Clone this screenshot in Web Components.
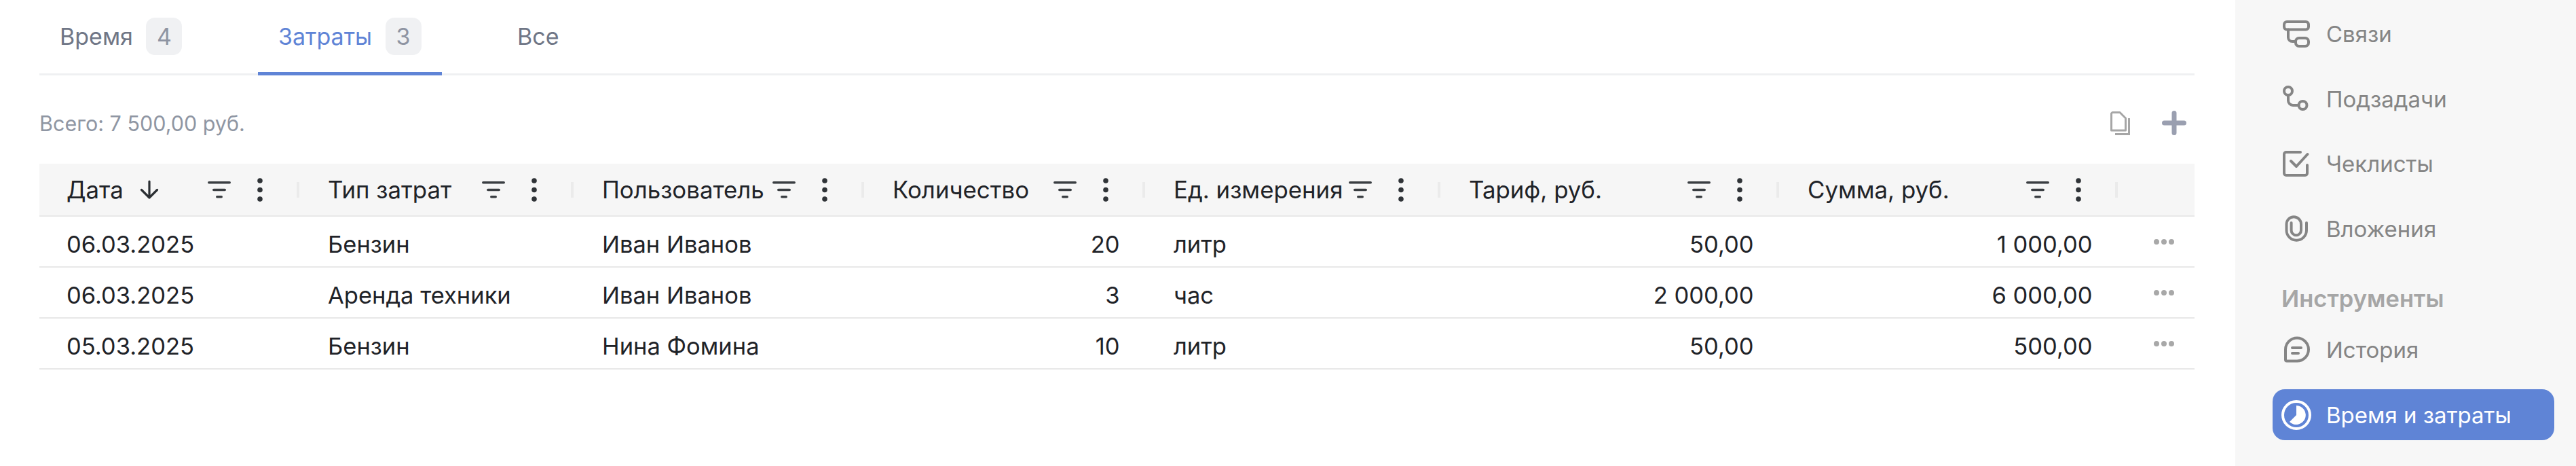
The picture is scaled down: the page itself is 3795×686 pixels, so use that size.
<!DOCTYPE html>
<html lang="ru">
<head>
<meta charset="utf-8">
<title>Время и затраты</title>
<style>
  html, body { margin: 0; height: 100%; background: #fff; overflow: hidden; }
  body { font-family: Inter, "Noto Sans", sans-serif; }
</style>
</head>
<body>
<task-page>
  <tab-bar>
    <tab-item count="4">Время</tab-item>
    <tab-item count="3" active>Затраты</tab-item>
    <tab-item>Все</tab-item>
  </tab-bar>
  <cost-toolbar>Всего: 7 500,00 руб.</cost-toolbar>
  <cost-table></cost-table>
  <side-nav slot="side">
    <side-item icon="links">Связи</side-item>
    <side-item icon="subtasks">Подзадачи</side-item>
    <side-item icon="checklist">Чеклисты</side-item>
    <side-item icon="attach">Вложения</side-item>
    <side-label>Инструменты</side-label>
    <side-item icon="history">История</side-item>
    <side-item icon="clock" active>Время и затраты</side-item>
  </side-nav>
</task-page>

<script>
// small helper, every element here is the same shape: static markup in an open shadow root
class Base extends HTMLElement {
  constructor() {
    super();
    this.attachShadow({ mode: 'open' });
  }
  connectedCallback() {
    this.render();
  }
}

class TaskPage extends Base {
  render() {
    this.shadowRoot.innerHTML = `
      <style>
        :host { display: flex; height: 686px; width: 3795px; }
        main { flex: none; width: 3175px; margin-left: 58px; margin-right: 60px; }
        aside { flex: 1; background: #f7f7f7; }
      </style>
      <main><slot></slot></main>
      <aside><slot name="side"></slot></aside>
    `;
  }
}

class TabBar extends Base {
  render() {
    this.shadowRoot.innerHTML = `
      <style>
        :host {
          display: flex;
          gap: 81.500px;
          height: 111px;
          box-sizing: border-box;
          border-bottom: 3px solid #eff0f2;
        }
      </style>
      <slot></slot>
    `;
  }
}

class TabItem extends Base {
  render() {
    const count = this.getAttribute('count');
    this.shadowRoot.innerHTML = `
      <style>
        :host {
          display: flex;
          align-items: flex-start;
          gap: 19.500px;
          height: 111px;
          box-sizing: border-box;
          padding: 26px 30px 0;
          font-size: 34px;
          color: #6f7686;
        }
        :host([active]) {
          color: #5f84d6;
          border-bottom: 5px solid #5f84d6;
        }
        .label { line-height: 55px; }
        .badge {
          width: 53px;
          height: 55px;
          line-height: 55px;
          text-align: center;
          border-radius: 13px;
          background: #f0f1f3;
          color: #8e94a2;
        }
      </style>
      <span class="label"><slot></slot></span>
      ${count ? `<span class="badge">${count}</span>` : ''}
    `;
  }
}

class CostToolbar extends Base {
  render() {
    this.shadowRoot.innerHTML = `
      <style>
        :host {
          display: flex;
          align-items: center;
          height: 130px;
          box-sizing: border-box;
          padding-top: 10px;
          font-size: 30.500px;
          color: #8f96a3;
        }
        .total { flex: 1; }
        .copy { margin-right: 47px; }
        .plus { margin-right: 12px; }
        svg { display: block; }
      </style>
      <span class="total"><slot></slot></span>
      <svg class="copy" width="29" height="35" viewBox="0 0 29 35" fill="none" stroke="#a6a6a6" stroke-width="3">
        <path d="M3 1.500H14L22.500 10V28H1.500V3Z" stroke-linejoin="round"/>
        <path d="M27.500 10V33.500H7"/>
      </svg>
      <svg class="plus" width="36" height="36" viewBox="0 0 36 36" fill="none" stroke="#9a9fb0" stroke-width="7" stroke-linecap="round">
        <path d="M18 3.500V32.500M3.500 18H32.500"/>
      </svg>
    `;
  }
}

const COLS = '385px 404px 428px 414px 435px 499px 499px 111px';

class CostTable extends Base {
  render() {
    const heads = ['Дата', 'Тип затрат', 'Пользователь', 'Количество', 'Ед. измерения', 'Тариф, руб.', 'Сумма, руб.'];
    const rows = [
      ['06.03.2025', 'Бензин', 'Иван Иванов', '20', 'литр', '50,00', '1 000,00'],
      ['06.03.2025', 'Аренда техники', 'Иван Иванов', '3', 'час', '2 000,00', '6 000,00'],
      ['05.03.2025', 'Бензин', 'Нина Фомина', '10', 'литр', '50,00', '500,00'],
    ];
    const right = [3, 5, 6];
    this.shadowRoot.innerHTML = `
      <style>
        :host { display: block; font-size: 34.500px; color: #1f2328; }
        .head, .row { display: grid; grid-template-columns: ${COLS}; }
        .head { height: 78px; box-sizing: border-box; background: #f6f6f6; border-bottom: 2px solid #e8e8e8; font-size: 34.800px; }
        .row { height: 75px; grid-template-rows: 73px; box-sizing: border-box; border-bottom: 2px solid #e8e8e8; }
      </style>
      <div class="head">
        ${heads.map((h, i) => `<head-cell ${i === 0 ? 'sorted' : ''}>${h}</head-cell>`).join('')}
        <span></span>
      </div>
      ${rows.map(r => `
        <div class="row">
          ${r.map((c, i) => `<body-cell ${right.includes(i) ? 'right' : ''}>${c}</body-cell>`).join('')}
          <row-menu></row-menu>
        </div>
      `).join('')}
    `;
  }
}

class HeadCell extends Base {
  render() {
    const arrow = this.hasAttribute('sorted') ? `
      <svg class="arrow" width="28" height="28" viewBox="0 0 28 28" fill="none" stroke="#2b2f33" stroke-width="3.200" stroke-linecap="round" stroke-linejoin="round">
        <path d="M14 2V26M2.500 14.500L14 26L25.500 14.500"/>
      </svg>` : '';
    this.shadowRoot.innerHTML = `
      <style>
        :host {
          display: flex;
          align-items: center;
          padding: 0 2px 0 40px;
          min-width: 0;
        }
        .title { flex: 1; min-width: 0; display: flex; align-items: center; gap: 24px; white-space: nowrap; }
        svg { display: block; flex: none; }
        .filter { margin-right: 39px; }
        .dots { margin-right: 50px; }
        .sep { flex: none; width: 4px; height: 23px; background: #ebebeb; }
      </style>
      <span class="title"><span><slot></slot></span>${arrow}</span>
      <svg class="filter" width="34" height="25" viewBox="0 0 34 25" fill="#3a3e42">
        <rect x="0" y="0" width="34" height="3.600" rx="1.800"/>
        <rect x="7" y="10.700" width="20" height="3.600" rx="1.800"/>
        <rect x="12" y="21" width="10" height="3.600" rx="1.800"/>
      </svg>
      <svg class="dots" width="8" height="35" viewBox="0 0 8 35" fill="#2f3337">
        <circle cx="4" cy="4" r="3.800"/><circle cx="4" cy="17.500" r="3.800"/><circle cx="4" cy="31" r="3.800"/>
      </svg>
      <span class="sep"></span>
    `;
  }
}

class BodyCell extends Base {
  render() {
    this.shadowRoot.innerHTML = `
      <style>
        :host {
          display: block;
          padding: 0 39.500px 0 40px;
          line-height: 81px;
          white-space: nowrap;
        }
        :host([right]) { text-align: right; }
      </style>
      <slot></slot>
    `;
  }
}

class RowMenu extends Base {
  render() {
    this.shadowRoot.innerHTML = `
      <style>
        :host { display: flex; align-items: center; padding-left: 51px; }
        svg { display: block; }
      </style>
      <svg width="30" height="8" viewBox="0 0 30 8" fill="#a8a8a8">
        <circle cx="4" cy="4" r="4"/><circle cx="15" cy="4" r="4"/><circle cx="26" cy="4" r="4"/>
      </svg>
    `;
  }
}

class SideNav extends Base {
  render() {
    this.shadowRoot.innerHTML = `
      <style>
        :host {
          display: flex;
          flex-direction: column;
          gap: 20.500px;
          padding: 12.500px 32px 0 55px;
        }
      </style>
      <slot></slot>
    `;
  }
}

class SideLabel extends Base {
  render() {
    this.shadowRoot.innerHTML = `
      <style>
        :host {
          display: block;
          height: 50.500px;
          padding-left: 13px;
          margin-top: 12px;
          line-height: 66px;
          font-size: 34.500px;
          font-weight: 600;
          color: #a6a6a6;
        }
      </style>
      <slot></slot>
    `;
  }
}

const SIDE_ICONS = {
  links: `<rect x="2" y="2" width="36" height="11.500" rx="4"/><rect x="19" y="26" width="19" height="12" rx="5"/><path d="M8 13.500V25a6 6 0 0 0 6 6h5"/>`,
  subtasks: `<circle cx="8" cy="8" r="6"/><circle cx="29.500" cy="29" r="6"/><path d="M8 14V22a7 7 0 0 0 7 7h8.500"/>`,
  checklist: `<path d="M26 3H5a3 3 0 0 0-3 3V34a3 3 0 0 0 3 3H33a3 3 0 0 0 3-3V22"/><path d="M12 16L20 24L36.500 6"/>`,
  attach: `<path d="M35 11V22a14.750 14.750 0 0 1-29.500 0V13a10.750 10.750 0 0 1 21.500 0V22a7.200 7.200 0 0 1-14.400 0V11"/>`,
  history: `<path d="M4 19.500a17 17 0 1 1 17 17H6a2 2 0 0 1-2-2Z"/><path d="M14 17H27M14 25H23"/>`,
  clock: `<circle cx="22" cy="22" r="20" stroke="#fff"/><path d="M22 22V8A14 14 0 1 1 12 32Z" fill="#fff" stroke="none"/>`,
};

class SideItem extends Base {
  render() {
    const name = this.getAttribute('icon');
    const size = name === 'clock' ? 44 : 40;
    this.shadowRoot.innerHTML = `
      <style>
        :host {
          display: flex;
          align-items: center;
          height: 75px;
          border-radius: 18px;
          box-sizing: border-box;
          padding-left: 15px;
          font-size: 33px;
          color: #858585;
        }
        :host([active]) {
          background: #5f84d6;
          color: #fff;
          padding-left: 13px;
        }
        .ico { flex: none; width: 40px; margin-right: 24px; }
        :host([active]) .ico { width: 44px; margin-right: 22px; }
        svg { display: block; }
      </style>
      <span class="ico">
        <svg width="${size}" height="${size}" viewBox="0 0 ${size} ${size}" fill="none" stroke="#858585" stroke-width="4" stroke-linecap="round" stroke-linejoin="round">${SIDE_ICONS[name]}</svg>
      </span>
      <slot></slot>
    `;
  }
}

customElements.define('task-page', TaskPage);
customElements.define('tab-bar', TabBar);
customElements.define('tab-item', TabItem);
customElements.define('cost-toolbar', CostToolbar);
customElements.define('cost-table', CostTable);
customElements.define('head-cell', HeadCell);
customElements.define('body-cell', BodyCell);
customElements.define('row-menu', RowMenu);
customElements.define('side-nav', SideNav);
customElements.define('side-label', SideLabel);
customElements.define('side-item', SideItem);
</script>
</body>
</html>
